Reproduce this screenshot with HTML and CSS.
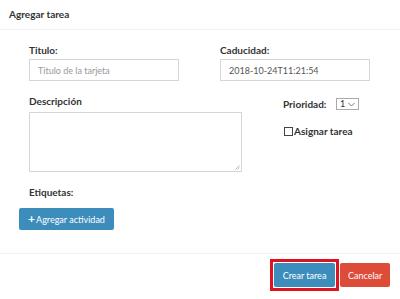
FILE: index.html
```html
<!DOCTYPE html>
<html lang="es">
<head>
    <meta charset="UTF-8">
    <title>Agregar tarea</title>
    <link rel="stylesheet" href="styles.css">
</head>
<body>

<div class="modal">
    <div class="cabecera">
        <h4>Agregar tarea</h4>
    </div>

    <div class="cuerpo">
        <div class="fila dos">
            <div class="campo">
                <label>Titulo:</label>
                <input type="text" class="caja" placeholder="Titulo de la tarjeta">
            </div>
            <div class="campo">
                <label>Caducidad:</label>
                <input type="text" class="caja" value="2018-10-24T11:21:54">
            </div>
        </div>

        <div class="fila tres">
            <div class="campo">
                <label>Descripción</label>
                <div class="area">
                    <svg class="grip" width="6" height="6" viewBox="0 0 6 6"><path d="M5.5 1.5 L1.5 5.5 M5.5 3.5 L3.5 5.5" stroke="#aaa" stroke-width="0.8"/></svg>
                </div>
            </div>
            <div class="lado">
                <div class="prioridad">
                    <label>Prioridad:</label>
                    <div class="selector">1 <span class="flecha"><svg width="7" height="5" viewBox="0 0 7 5"><path d="M0.5 1 L3.5 4 L6.5 1" fill="none" stroke="#777" stroke-width="1"/></svg></span></div>
                </div>
                <div class="asignar">
                    <span class="check"></span>
                    <label>Asignar tarea</label>
                </div>
            </div>
        </div>

        <div class="etiquetas">
            <label>Etiquetas:</label>
            <button class="boton azul"><span class="mas">+</span>Agregar actividad</button>
        </div>
    </div>

    <div class="pie">
        <span class="marco"><button class="boton azul crear">Crear tarea</button></span>
        <button class="boton rojo">Cancelar</button>
    </div>
</div>

</body>
</html>
```

FILE: styles.css
```css
/*BASE*/
body {
    margin: 0;
    background-color: #fff;
    font-family: Lato, "Liberation Sans", sans-serif;
    color: #333;
}
.modal {
    width: 400px;
    height: 299px;
}
label {
    display: block;
    font-size: 10px;
    font-weight: bold;
    color: #333;
}

/*CABECERA*/
.cabecera {
    height: 30px;
    border-bottom: 1px solid #f2f2f2;
    box-sizing: border-box;
    padding: 8px 9px 0;
}
.cabecera h4 {
    margin: 0;
    font-size: 10px;
    font-weight: bold;
    color: #333;
}

/*CUERPO*/
.cuerpo {
    height: 223px;
    padding-left: 29px;
    box-sizing: border-box;
}
.fila {
    display: flex;
}
.dos {
    padding-top: 14px;
    gap: 41px;
}
.dos label {
    height: 15px;
}
.caja {
    display: block;
    width: 150px;
    height: 22px;
    box-sizing: border-box;
    border: 1px solid #d2d6de;
    padding: 0 8px;
    font-family: inherit;
    font-size: 9px;
    color: #555;
}
.caja::placeholder {
    color: #999;
}
.tres {
    padding-top: 14px;
}
.tres .campo label {
    height: 17px;
}
.area {
    position: relative;
    width: 213px;
    height: 60px;
    box-sizing: border-box;
    border: 1px solid #d2d6de;
}
.grip {
    position: absolute;
    right: 1px;
    bottom: 1px;
}
.lado {
    margin-left: 41px;
    padding-top: 3px;
}
.prioridad {
    display: flex;
    align-items: center;
}
.prioridad label {
    width: 53px;
}
.selector {
    width: 23px;
    height: 12px;
    box-sizing: border-box;
    border: 1px solid #aaa;
    font-size: 9px;
    line-height: 10px;
    padding-left: 3px;
    color: #333;
    display: flex;
    align-items: center;
    gap: 3px;
}
.flecha {
    display: flex;
}
.asignar {
    display: flex;
    align-items: center;
    margin-top: 15px;
    margin-left: 1px;
}
.check {
    width: 9px;
    height: 9px;
    box-sizing: border-box;
    border: 1px solid #444;
    margin-right: 1px;
}
.etiquetas {
    padding-top: 14px;
}
.etiquetas label {
    height: 21px;
}
.etiquetas .boton {
    margin-left: -10px;
    width: 95px;
}
.mas {
    font-weight: bold;
    font-size: 12px;
    margin-right: 1px;
}

/*BOTONER*/
.boton {
    height: 22px;
    border: none;
    border-radius: 2px;
    font-family: inherit;
    font-size: 9px;
    color: #fff;
    padding: 0 8px;
}
.azul {
    background-color: #3c8dbc;
}
.rojo {
    background-color: #dd4b39;
    width: 50px;
}

/*PIE*/
.pie {
    border-top: 1px solid #f2f2f2;
    display: flex;
    justify-content: flex-end;
    align-items: center;
    gap: 1px;
    padding: 5px 10px 0 0;
}
.pie .boton {
    height: 24px;
}
.marco {
    display: flex;
    border: 3px solid #dc1420;
    padding: 1px;
}
.crear {
    width: 61px;
}
```
